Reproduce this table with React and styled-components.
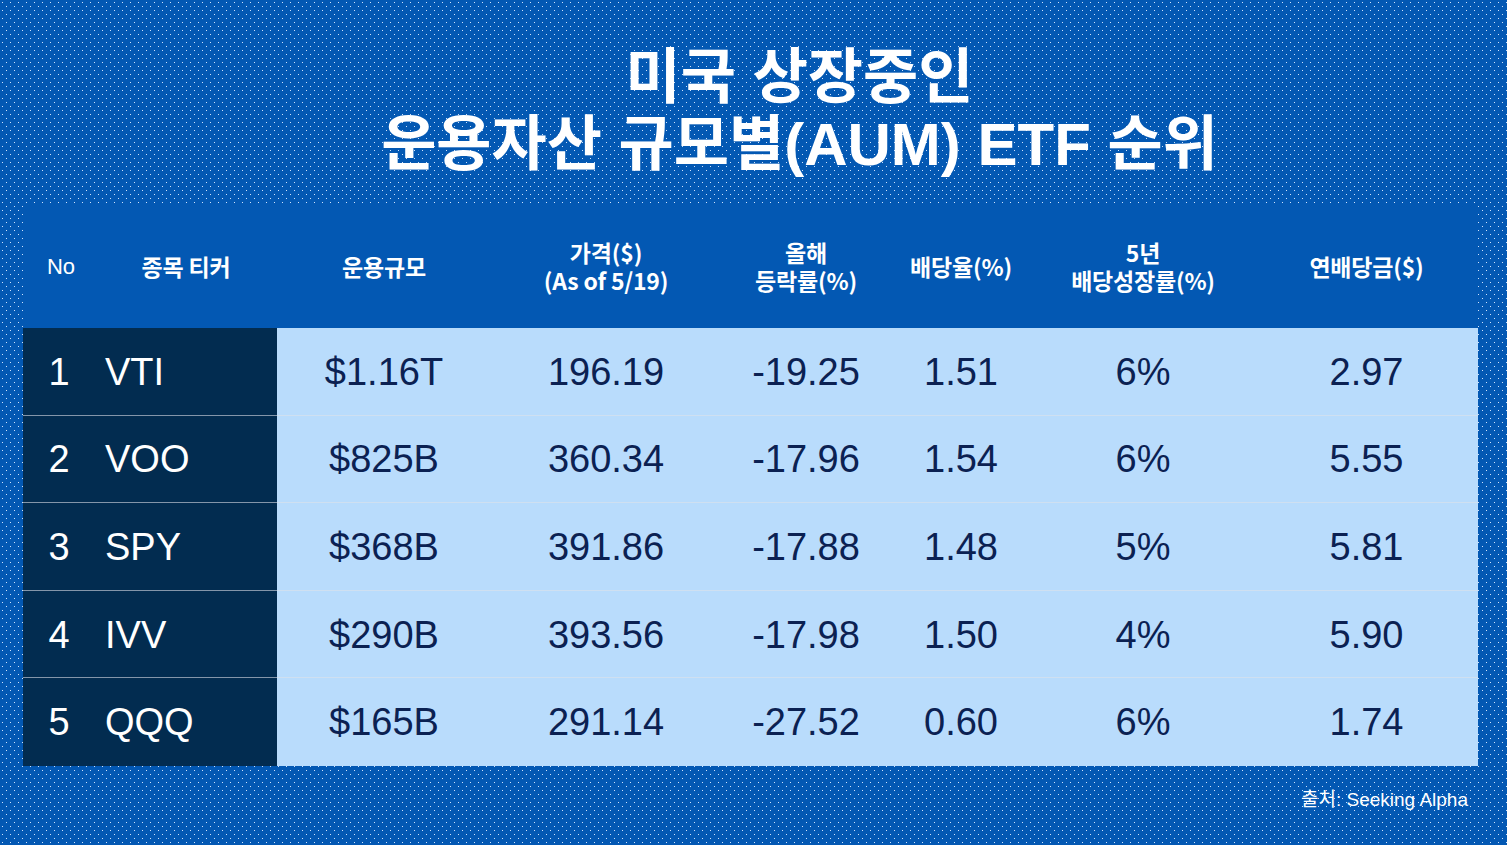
import React from "react";
import styled, { createGlobalStyle } from "styled-components";

const ROWS = [
  { no: 1, ticker: "VTI", aum: "$1.16T", price: "196.19", ytd: "-19.25", yield: "1.51", growth: "6%", dividend: "2.97" },
  { no: 2, ticker: "VOO", aum: "$825B", price: "360.34", ytd: "-17.96", yield: "1.54", growth: "6%", dividend: "5.55" },
  { no: 3, ticker: "SPY", aum: "$368B", price: "391.86", ytd: "-17.88", yield: "1.48", growth: "5%", dividend: "5.81" },
  { no: 4, ticker: "IVV", aum: "$290B", price: "393.56", ytd: "-17.98", yield: "1.50", growth: "4%", dividend: "5.90" },
  { no: 5, ticker: "QQQ", aum: "$165B", price: "291.14", ytd: "-27.52", yield: "0.60", growth: "6%", dividend: "1.74" },
];

const COLUMNS = "72px 182px 214px 230px 170px 140px 224px 223px";

const GlobalStyle = createGlobalStyle`
  html, body {
    margin: 0;
    padding: 0;
  }
  body {
    font-family: "Liberation Sans", "Noto Sans CJK KR", sans-serif;
  }
`;

const Page = styled.div`
  width: 1507px;
  height: 845px;
  box-sizing: border-box;
  display: flex;
  flex-direction: column;
  background-color: #0358b3;
  background-image:
    conic-gradient(at 1px 1px, transparent 75%, #cfe3fc 0),
    conic-gradient(at 1px 1px, transparent 75%, #cfe3fc 0);
  background-size: 8px 8px;
  background-position: 2px 2px, 6px 6px;
  overflow: hidden;
`;

const Title = styled.h1`
  margin: 0;
  padding: 44px 0 0 92px;
  height: 205px;
  box-sizing: border-box;
  text-align: center;
  color: #ffffff;
  font-family: "Liberation Sans", "Noto Sans CJK KR", sans-serif;
  font-weight: 700;
  font-size: 60px;
  line-height: 67px;
`;

const TitleLine = styled.span`
  display: block;
`;

const Table = styled.div`
  margin-left: 23px;
  width: 1455px;
  display: flex;
  flex-direction: column;
`;

const HeaderRow = styled.div`
  display: grid;
  grid-template-columns: ${COLUMNS};
  height: 123px;
  align-items: center;
  background: #0358b3;
`;

const HeadCell = styled.div`
  display: flex;
  flex-direction: column;
  align-items: center;
  gap: 1px;
  color: #ffffff;
  text-align: center;
  font-family: ${(p) =>
    p.$latin ? `"Liberation Sans", sans-serif` : `"Noto Sans CJK KR", "Liberation Sans", sans-serif`};
  font-weight: ${(p) => (p.$latin ? 400 : 700)};
  font-size: ${(p) => (p.$latin ? "22px" : "23px")};
  line-height: 27px;
  letter-spacing: ${(p) => (p.$latin ? "0" : "-0.2px")};
  padding-left: ${(p) => (p.$latin ? "4px" : "0")};
`;

const HeadLine = styled.span`
  display: block;
  height: 27px;
`;

const Row = styled.div`
  display: grid;
  grid-template-columns: ${COLUMNS};
  height: 87.6px;
`;

const Cell = styled.div`
  display: flex;
  align-items: center;
  justify-content: ${(p) => (p.$left ? "flex-start" : "center")};
  padding-left: ${(p) => (p.$left ? "10px" : "0")};
  box-sizing: border-box;
  background: ${(p) => (p.$dark ? "#022c50" : "#b9dcfc")};
  color: ${(p) => (p.$dark ? "#ffffff" : "#0b2152")};
  border-bottom: 1px solid ${(p) => (p.$last ? "transparent" : p.$dark ? "#8496aa" : "#cfe0f1")};
  font-family: "Liberation Sans", sans-serif;
  font-size: 38px;
  line-height: 1;
  padding-top: 1px;
`;

const Source = styled.div`
  align-self: flex-end;
  margin: 22px 39px 0 0;
  color: #ffffff;
  font-family: "Liberation Sans", "Noto Sans CJK KR", sans-serif;
  font-size: 19px;
  line-height: 24px;
`;

const HEADERS = [
  { lines: ["No"], latin: true },
  { lines: ["종목 티커"] },
  { lines: ["운용규모"] },
  { lines: ["가격($)", "(As of 5/19)"] },
  { lines: ["올해", "등락률(%)"] },
  { lines: ["배당율(%)"] },
  { lines: ["5년", "배당성장률(%)"] },
  { lines: ["연배당금($)"] },
];

export default function App() {
  return (
    <>
      <GlobalStyle />
      <Page>
        <Title>
          <TitleLine>미국 상장중인</TitleLine>
          <TitleLine>운용자산 규모별(AUM) ETF 순위</TitleLine>
        </Title>
        <Table>
          <HeaderRow>
            {HEADERS.map((h) => (
              <HeadCell key={h.lines[0]} $latin={h.latin}>
                {h.lines.map((line) => (
                  <HeadLine key={line}>{line}</HeadLine>
                ))}
              </HeadCell>
            ))}
          </HeaderRow>
          {ROWS.map((r, i) => {
            const last = i === ROWS.length - 1;
            return (
              <Row key={r.no}>
                <Cell $dark $last={last}>{r.no}</Cell>
                <Cell $dark $left $last={last}>{r.ticker}</Cell>
                <Cell $last={last}>{r.aum}</Cell>
                <Cell $last={last}>{r.price}</Cell>
                <Cell $last={last}>{r.ytd}</Cell>
                <Cell $last={last}>{r.yield}</Cell>
                <Cell $last={last}>{r.growth}</Cell>
                <Cell $last={last}>{r.dividend}</Cell>
              </Row>
            );
          })}
        </Table>
        <Source>출처: Seeking Alpha</Source>
      </Page>
    </>
  );
}
